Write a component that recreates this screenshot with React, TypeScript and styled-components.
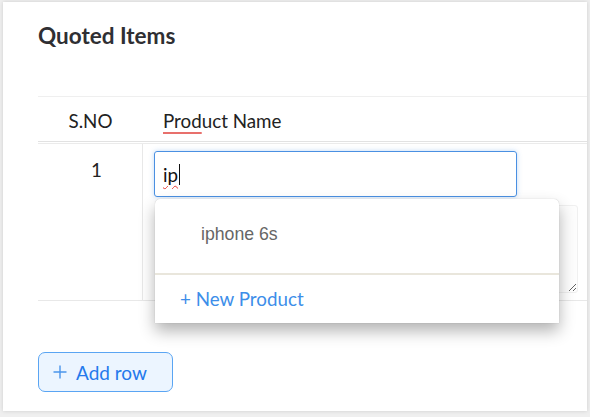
import React from 'react';
import styled, {createGlobalStyle} from 'styled-components';

const GlobalStyle = createGlobalStyle`
    html, body {
        margin: 0;
        padding: 0;
        background: #efefef;
        font-family: 'Lato', 'Liberation Sans', sans-serif;
    }
    * {
        box-sizing: border-box;
    }
`

const Page = styled.div`
    width: 590px;
    height: 417px;
    padding: 2px 3px 6px 3px;
    overflow: hidden;
`

const Card = styled.section`
    background: #fff;
    height: 409px;
    box-shadow: 0 0 4px rgba(0, 0, 0, 0.14);
    padding: 20px 0 0 35px;
`

const Title = styled.h2`
    margin: 0;
    font-size: 22.5px;
    font-weight: 700;
    line-height: 28px;
    color: #2f2f33;
`

const Table = styled.div`
    margin-top: 46px;
    border-top: 1px solid #efefef;
`

const HeadRow = styled.div`
    display: grid;
    grid-template-columns: 105px 1fr;
    height: 45px;
    align-items: center;
    border-bottom: 1px solid #e2e2e2;
`

const HeadCell = styled.div<{ $center?: boolean }>`
    font-size: 18.8px;
    color: #222;
    text-align: ${props => props.$center ? 'center' : 'left'};
    padding-left: ${props => props.$center ? '0' : '20px'};
    padding-top: 3px;
`

const Misspelled = styled.span`
    text-decoration: underline;
    text-decoration-color: #e8706c;
    text-decoration-thickness: 2px;
    text-underline-offset: 4px;
`

const BodyRow = styled.div`
    display: grid;
    grid-template-columns: 105px 1fr;
    margin-top: 1px;
    border-top: 1px solid #ebebeb;
    border-bottom: 1px solid #e8e8e8;
`

const NumberCell = styled.div`
    border-right: 1px solid #e8e8e8;
    text-align: center;
    padding: 14px 0 0 13px;
    font-size: 18.8px;
    color: #222;
`

const ProductCell = styled.div`
    position: relative;
    padding: 7px 10px 7px 11px;
    display: flex;
    flex-direction: column;
    gap: 8px;
`

const FakeInput = styled.div`
    width: 363px;
    height: 46px;
    border: 1px solid #4a90e2;
    border-radius: 3px;
    box-shadow: 0 0 5px rgba(74, 144, 226, 0.35);
    display: flex;
    align-items: center;
    padding-left: 8px;
    font-size: 18.8px;
    color: #111;
`

const Typed = styled.span`
    text-decoration: underline wavy #e53935;
    text-decoration-thickness: 1px;
    text-underline-offset: 3px;
`

const Caret = styled.span`
    display: inline-block;
    width: 1px;
    height: 21px;
    background: #111;
    margin-left: 1px;
`

const Notes = styled.textarea`
    width: 423px;
    height: 88px;
    margin-left: 1px;
    border: 1px solid #f0f0f0;
    border-radius: 3px;
    background: #fdfdfd;
    resize: both;
    font-family: inherit;
    outline: none;
`

const Dropdown = styled.div`
    position: absolute;
    top: 55px;
    left: 12px;
    width: 404px;
    background: #fff;
    border-radius: 5px 5px 0 0;
    box-shadow: 0 8px 16px rgba(0, 0, 0, 0.3), 0 0 1px rgba(0, 0, 0, 0.25);
`

const Option = styled.div`
    height: 76px;
    padding: 25px 0 0 46px;
    font-family: 'Liberation Sans', Arial, sans-serif;
    font-size: 17.7px;
    color: #666;
    border-bottom: 2px solid #e9e6dc;
`

const NewProduct = styled.div`
    height: 48px;
    padding: 12px 0 0 25px;
    font-size: 18.8px;
    color: #3d8ee9;
`

const AddRow = styled.button`
    margin-top: 51px;
    width: 135px;
    height: 40px;
    display: flex;
    align-items: center;
    gap: 9px;
    padding: 0 0 0 14px;
    border: 1px solid #5aa5f3;
    border-radius: 7px;
    background: #ecf5ff;
    font-family: 'Lato', sans-serif;
    font-size: 19px;
    color: #2479ec;
    cursor: pointer;
`

const PlusIcon = () => (
    <svg width="14" height="14" viewBox="0 0 14 14">
        <path d="M7 0.5V13.5M0.5 7H13.5" stroke="#4a95ec" strokeWidth="1.4" fill="none"/>
    </svg>
)

export default function App() {
    return (
        <Page>
            <GlobalStyle/>
            <Card>
                <Title>Quoted Items</Title>
                <Table>
                    <HeadRow>
                        <HeadCell $center>S.NO</HeadCell>
                        <HeadCell><Misspelled>Prod</Misspelled>uct Name</HeadCell>
                    </HeadRow>
                    <BodyRow>
                        <NumberCell>1</NumberCell>
                        <ProductCell>
                            <FakeInput><Typed>ip</Typed><Caret/></FakeInput>
                            <Notes/>
                            <Dropdown>
                                <Option>iphone 6s</Option>
                                <NewProduct>+ New Product</NewProduct>
                            </Dropdown>
                        </ProductCell>
                    </BodyRow>
                </Table>
                <AddRow><PlusIcon/>Add row</AddRow>
            </Card>
        </Page>
    );
}
